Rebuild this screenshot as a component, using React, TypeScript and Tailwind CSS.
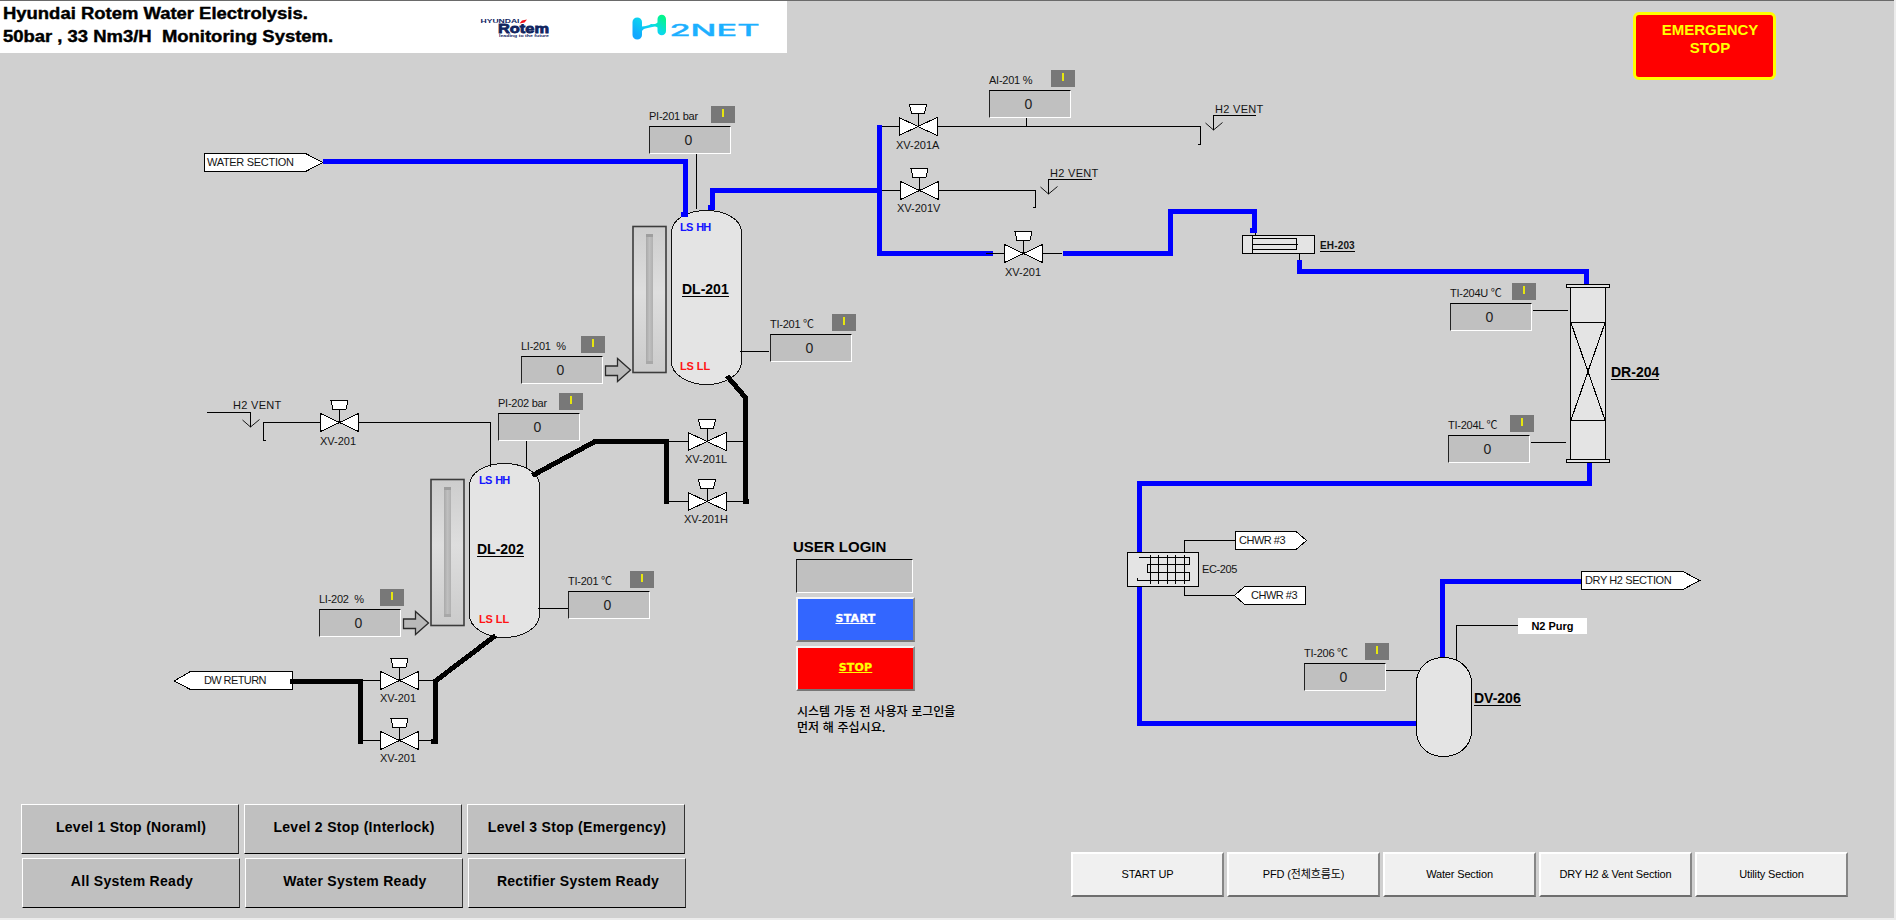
import React from "react";

const SANS = "font-['Liberation_Sans','Noto_Sans_CJK_KR',sans-serif]";

/* ---------- Text labels on the flow sheet ---------- */

type LabelProps = { at: string; children: React.ReactNode; look?: string };

function Label({ at, children, look = "" }: LabelProps) {
  return (
    <span className={`absolute whitespace-pre text-[11px] leading-[12px] text-[#141414] ${at} ${look}`}>{children}</span>
  );
}

function EquipmentName({ at, children }: LabelProps) {
  return (
    <span
      className={`absolute whitespace-pre border-b border-black text-[14px] font-bold leading-[13px] text-black ${at}`}
    >
      {children}
    </span>
  );
}

/* ---------- Instrument readout: caption, status flag, value ---------- */

type ReadoutProps = { at: string; name: string; width?: string };

function Readout({ at, name, width = "w-[86px]" }: ReadoutProps) {
  return (
    <div className={`absolute flex flex-col ${width} ${at}`}>
      <div className="flex h-[20px] items-start justify-between">
        <span className="whitespace-pre pt-[4px] text-[11px] leading-[12px] tracking-[-0.25px] text-[#141414]">
          {name}
        </span>
        <span className="flex h-[17px] w-[24px] justify-center bg-[#787878] pt-[3px]">
          <span className="h-[8px] w-[2px] bg-[#e6e610]" />
        </span>
      </div>
      <div className="flex h-[28px] w-[82px] items-center justify-center border border-b-white border-l-[#222] border-r-white border-t-black bg-[#c0c0c0] pr-[3px] text-[14px] leading-none text-[#222]">
        0
      </div>
    </div>
  );
}

const readouts: ReadoutProps[] = [
  { at: "left-[649px] top-[106px]", name: "PI-201 bar" },
  { at: "left-[770px] top-[314px]", name: "TI-201 ℃" },
  { at: "left-[989px] top-[70px]", name: "AI-201 %" },
  { at: "left-[521px] top-[336px]", name: "LI-201  %", width: "w-[84px]" },
  { at: "left-[1450px] top-[283px]", name: "TI-204U ℃" },
  { at: "left-[1448px] top-[415px]", name: "TI-204L ℃" },
  { at: "left-[498px] top-[393px]", name: "PI-202 bar", width: "w-[85px]" },
  { at: "left-[568px] top-[571px]", name: "TI-201 ℃" },
  { at: "left-[319px] top-[589px]", name: "LI-202  %", width: "w-[85px]" },
  { at: "left-[1304px] top-[643px]", name: "TI-206 ℃", width: "w-[85px]" },
];

/* ---------- Drawn symbols ---------- */

function Valve({ x, y }: { x: number; y: number }) {
  return (
    <g transform={`translate(${x} ${y})`} fill="#fff" stroke="#000" strokeWidth="1">
      <path d="M0 0V-13" />
      <path d="M-19 -9V9L19 -9V9Z" />
      <path d="M-8.5 -22H8.5L6.5 -13H-6.5Z" />
    </g>
  );
}

function VentArrow({ x, y, run }: { x: number; y: number; run: number }) {
  return (
    <g transform={`translate(${x} ${y})`} fill="none" stroke="#000">
      <path d={`M${run} 0H0V14`} />
      <path d="M-8 7.500L0 14.500L9 7" strokeWidth="0.9" shapeRendering="auto" />
    </g>
  );
}

function TankWithGauge({ x, y }: { x: number; y: number }) {
  return (
    <g transform={`translate(${x} ${y})`}>
      <path
        d="M0.500 22C0.500 10 16 0.500 35.500 0.500S70.500 10 70.500 22V152C70.500 164 55 174.500 35.500 174.500S0.500 164 0.500 152Z"
        fill="#e4e4e4"
        stroke="#111"
      />
      <rect x="-38" y="16.500" width="33" height="146" fill="url(#gauge)" stroke="#3c3c3c" strokeWidth="1.600" shapeRendering="auto" />
      <rect x="-25" y="24" width="7" height="130" fill="url(#gaugeBar)" />
      <rect x="-25" y="24" width="7" height="3" fill="#9e9e9e" />
      <rect x="-25" y="151" width="7" height="3" fill="#a8a8a8" />
      <path d="M-65.500 156V165.500H-53.500V171.500L-40.500 160L-53.500 148.500V156Z" fill="#b9b9b9" stroke="#2a2a2a" strokeWidth="1.300" shapeRendering="auto" />
    </g>
  );
}

function Drawing() {
  return (
    <svg className="absolute inset-0" width="1896" height="920" viewBox="0 0 1896 920" shapeRendering="crispEdges">
      <defs>
        <linearGradient id="gauge" x1="0" y1="0" x2="0" y2="1">
          <stop offset="0" stopColor="#cdcdcd" />
          <stop offset="0.450" stopColor="#dedede" />
          <stop offset="1" stopColor="#cbcbcb" />
        </linearGradient>
        <linearGradient id="gaugeBar" x1="0" y1="0" x2="1" y2="0">
          <stop offset="0" stopColor="#a9a9a9" />
          <stop offset="0.500" stopColor="#bfbfbf" />
          <stop offset="1" stopColor="#b0b0b0" />
        </linearGradient>
      </defs>

      {/* process tags */}
      <g fill="#fff" stroke="#000">
        <path d="M204.500 153.500H305.500L323 162.500L305.500 171.500H204.500Z" />
        <path d="M174 681L190.500 671.500H292.500V689.500H190.500Z" />
        <path d="M1235.500 531.500H1296L1306.500 540.500L1296 549.500H1235.500Z" />
        <path d="M1234.500 595.500L1244.500 586.500H1305.500V604.500H1244.500Z" />
      </g>

      <TankWithGauge x={671} y={210} />
      <TankWithGauge x={469} y={463} />

      {/* instrument and vent lines */}
      <g fill="none" stroke="#000">
        <path d="M696.500 154V209M740 351.500H769" />
        <path d="M882 126.500H1200.500V144.500H1198M1026.500 118V126" />
        <path d="M882 190.500H1035.500V207.500H1033" />
        <path d="M266 440.500H263.500V422.500H490.500V466.500M526.500 441V468" />
        <path d="M538 608.500H568M669 441.500H743M669 501.500H743" />
        <path d="M363 680.500H434M363 740.500H434" />
        <path d="M1299.500 253V260M1255.500 232V236M1533 310.500H1568M1531 442.500H1566" />
        <path d="M1184.500 552V540.500H1235M1184.500 586V595.500H1235" />
      </g>

      {/* hydrogen and water pipes */}
      <g fill="none" stroke="#0000ff" strokeWidth="5" strokeLinejoin="miter">
        <path d="M323 161.500H685.500V217M681 214.500H688" />
        <path d="M712.500 210V190.500H879.500M708 207.500H715" />
        <path d="M879.500 125V253.500H993M1063 253.500H1170.500V211.500H1254.500V233M1250 230.500H1257" />
        <path d="M1299.500 260V271.500H1586.500V285" />
        <path d="M1589.500 462V483.500H1139.500V723.500H1416" />
      </g>
      <path d="M882 126.500H899M986 253.500H1062" stroke="#000" />

      {/* drain pipes */}
      <g fill="none" stroke="#000" strokeWidth="5">
        <path d="M727 376L745.500 397.500V504M742.500 501.500H749" />
        <path d="M532.500 475.500L595 441.500H666.500V504" />
        <path d="M290 681.500H360.500V744" />
        <path d="M495.500 635.500L435.500 681V744M431 741.500H438" />
      </g>

      <Valve x={918} y={126.5} />
      <Valve x={919.5} y={190.5} />
      <Valve x={1023.5} y={253.5} />
      <Valve x={339.5} y={422.5} />
      <Valve x={399.5} y={680.5} />
      <Valve x={399.5} y={740.5} />
      <Valve x={707} y={441.5} />
      <Valve x={707} y={501.5} />

      <VentArrow x={1213.5} y={115.5} run={42} />
      <VentArrow x={1048.5} y={179.5} run={43} />
      <VentArrow x={250.5} y={412.5} run={-44} />

      {/* EH-203 */}
      <g fill="#e4e4e4" stroke="#000">
        <rect x="1242.500" y="235.500" width="72" height="18" />
        <path d="M1252.500 235V254M1252.500 238.500H1296.500V249.500H1252.500M1252.500 244.500H1298" />
      </g>

      {/* DR-204 */}
      <g fill="#e4e4e4" stroke="#000">
        <rect x="1570.500" y="287" width="35" height="173" />
        <path d="M1570.500 322.500H1605.500V420.500H1570.500Z" />
        <path d="M1571 323L1605 420M1605 323L1571 420" strokeWidth="1.100" />
        <rect x="1566.500" y="284.500" width="43" height="3" />
        <rect x="1566.500" y="459.500" width="43" height="3" />
      </g>

      {/* EC-205 */}
      <g fill="#e4e4e4" stroke="#000">
        <rect x="1127.500" y="552.500" width="71" height="34" />
        <path fill="none" d="M1150.500 555V584M1158.500 555V584M1167.500 555V584M1175.500 555V584M1184.500 555V584" />
        <path fill="none" d="M1139 557.500H1189.500V564.500H1147.500V572.500H1189.500V580.500H1137.500V578" />
      </g>

      {/* DV-206 */}
      <path d="M1442.500 657V581.500H1582" fill="none" stroke="#0000ff" strokeWidth="5" />
      <path d="M1456.500 661V625.500H1518M1386 670.500H1420" fill="none" stroke="#000" />
      <path
        d="M1416.500 683C1416.500 668 1428 657.500 1443.500 657.500S1471.500 668 1471.500 683V731C1471.500 746 1459 756.500 1443.500 756.500S1416.500 746 1416.500 731Z"
        fill="#e4e4e4"
        stroke="#000"
      />
      <path d="M1581.500 571.500H1683L1699.500 580.500L1683 589.500H1581.500Z" fill="#fff" stroke="#000" />
    </svg>
  );
}

/* ---------- Logos ---------- */

function RotemLogo() {
  return (
    <svg width="72" height="22" viewBox="0 0 72 22" className="font-['Liberation_Sans',sans-serif]">
      <text x="0.500" y="5.500" fontSize="5.500" fontWeight="700" fill="#10245f" textLength="39" lengthAdjust="spacingAndGlyphs">
        HYUNDAI
      </text>
      <text x="18" y="16" fontSize="13" fontWeight="700" fill="#10245f" stroke="#10245f" strokeWidth="0.800" textLength="51" lengthAdjust="spacingAndGlyphs">
        Rotem
      </text>
      <path d="M39.500 6.500L42 3.500L47 2.500L44.500 5.500Z" fill="#f01018" />
      <text x="19" y="19.500" fontSize="3.200" fontWeight="700" fill="#10245f" textLength="50" lengthAdjust="spacingAndGlyphs">
        leading to the future
      </text>
    </svg>
  );
}

function H2NetLogo() {
  return (
    <svg width="130" height="28" viewBox="0 0 130 28" className="font-['Inter','Liberation_Sans',sans-serif]">
      <defs>
        <linearGradient id="hMark" x1="0" y1="1" x2="1" y2="0">
          <stop offset="0.150" stopColor="#12a8ff" />
          <stop offset="0.550" stopColor="#0bd8ee" />
          <stop offset="0.900" stopColor="#04f58c" />
        </linearGradient>
      </defs>
      <path
        d="M0.500 9A4.700 4.500 0 0 1 10 9V13.500C13 13.500 14.500 12.500 17.500 12C19 10 22 12.500 25.500 9.500V6A4.200 4.200 0 0 1 34 6V18A4.200 4.200 0 0 1 25.500 18V14.500C23 12.500 20 14.500 18 14.500C15 15.500 12 15 10 18V22A4.700 4.500 0 0 1 0.500 22Z"
        fill="url(#hMark)"
      />
      <text x="37.500" y="22.500" fontSize="16.500" fontWeight="500" fill="#1cb0ff" stroke="#1cb0ff" strokeWidth="0.300" textLength="90" lengthAdjust="spacingAndGlyphs">
        2NET
      </text>
    </svg>
  );
}

/* ---------- Panels and buttons ---------- */

function Header() {
  return (
    <header className="flex items-start justify-between border-t border-[#6a6a6a] pr-[118px]">
      <div className="flex h-[52px] w-[787px] items-start bg-white">
        <h1 className="w-[480px] whitespace-pre pl-[3px] pt-[1px] text-[16px] font-bold leading-[23px] text-black [-webkit-text-stroke:0.4px_black]">
          <span className="block origin-left scale-x-[1.153]">Hyundai Rotem Water Electrolysis.</span>
          <span className="block origin-left scale-x-[1.153]">50bar , 33 Nm3/H  Monitoring System.</span>
        </h1>
        <div className="w-[152px] pt-[16px]">
          <RotemLogo />
        </div>
        <div className="pt-[12px]">
          <H2NetLogo />
        </div>
      </div>
      <button className="mt-[11px] h-[68px] w-[143px] rounded-[6px] border-[3px] border-[#ffff00] bg-[#ff0000] pb-[14px] pl-[11px] text-[15px] font-bold leading-[18px] text-[#ffff00]">
        EMERGENCY
        <br />
        STOP
      </button>
    </header>
  );
}

function UserLogin() {
  return (
    <section className="absolute left-[796px] top-[538px] flex w-[164px] flex-col">
      <h2 className="-ml-[3px] h-[21px] text-[15px] font-bold leading-[18px] text-black">USER LOGIN</h2>
      <div className="h-[34px] w-[117px] border border-b-white border-l-[#222] border-r-white border-t-black bg-[#c0c0c0]" />
      <button className="mt-[4px] h-[45px] w-[119px] border-2 border-b-[#777] border-l-[#f4f4f4] border-r-[#888] border-t-[#f4f4f4] bg-[#3366ff] font-['DejaVu_Sans',sans-serif] text-[11px] font-bold tracking-[0.3px] text-white underline [-webkit-text-stroke:0.3px_white]">
        START
      </button>
      <button className="mt-[4px] h-[45px] w-[119px] border-2 border-b-[#777] border-l-[#f4f4f4] border-r-[#888] border-t-[#f4f4f4] bg-[#ff0000] font-['DejaVu_Sans',sans-serif] text-[11px] font-bold tracking-[0.2px] text-[#ffff00] underline [-webkit-text-stroke:0.3px_#ffff00]">
        STOP
      </button>
      <p className="mt-[12px] whitespace-nowrap pl-px font-['Noto_Sans_CJK_KR',sans-serif] text-[12px] font-medium leading-[16px] text-black [word-spacing:1px]">
        시스템 가동 전 사용자 로그인을
        <br />
        먼저 해 주십시요.
      </p>
    </section>
  );
}

const systemRows = [
  { pad: "pl-0", items: ["Level 1 Stop (Noraml)", "Level 2 Stop (Interlock)", "Level 3 Stop (Emergency)"] },
  { pad: "pl-px", items: ["All System Ready", "Water System Ready", "Rectifier System Ready"] },
];

const sections = ["START UP", "PFD (전체흐름도)", "Water Section", "DRY H2 & Vent Section", "Utility Section"];

function Footer() {
  return (
    <footer className="flex items-start justify-between pb-[10px] pl-[21px] pr-[46px]">
      <div className="flex flex-col gap-[4px]">
        {systemRows.map((row) => (
          <div key={row.items[0]} className={`flex gap-[5px] ${row.pad}`}>
            {row.items.map((name) => (
              <button
                key={name}
                className="h-[50px] w-[218px] border border-b-black border-l-white border-r-[#333] border-t-white bg-[#c0c0c0] pb-[3px] pl-[2px] text-[14px] font-bold tracking-[0.3px] text-black"
              >
                {name}
              </button>
            ))}
          </div>
        ))}
      </div>
      <nav className="flex gap-[3px] pt-[48px]">
        {sections.map((name) => (
          <button
            key={name}
            className="h-[45px] w-[153px] border-2 border-b-[#6e6e6e] border-l-white border-r-[#868686] border-t-white bg-[#f0f0f0] text-[11px] tracking-[-0.15px] text-black"
          >
            {name}
          </button>
        ))}
      </nav>
    </footer>
  );
}

function FlowSheet() {
  return (
    <div className="absolute inset-0">
      <Drawing />

      {readouts.map((r) => (
        <Readout key={r.at} {...r} />
      ))}

      <Label at="left-[207px] top-[156px]" look="tracking-[-0.3px]">WATER SECTION</Label>
      <Label at="left-[204px] top-[674px]" look="tracking-[-0.6px]">DW RETURN</Label>
      <Label at="left-[1239px] top-[534px]" look="tracking-[-0.5px]">CHWR #3</Label>
      <Label at="left-[1251px] top-[589px]" look="tracking-[-0.5px]">CHWR #3</Label>
      <Label at="left-[1585px] top-[574px]" look="tracking-[-0.4px]">DRY H2 SECTION</Label>
      <Label at="left-[1202px] top-[563px]" look="tracking-[-0.4px]">EC-205</Label>

      <Label at="left-[896px] top-[139px]">XV-201A</Label>
      <Label at="left-[897px] top-[202px]">XV-201V</Label>
      <Label at="left-[1005px] top-[266px]">XV-201</Label>
      <Label at="left-[320px] top-[435px]">XV-201</Label>
      <Label at="left-[380px] top-[692px]">XV-201</Label>
      <Label at="left-[380px] top-[752px]">XV-201</Label>
      <Label at="left-[685px] top-[453px]">XV-201L</Label>
      <Label at="left-[684px] top-[513px]">XV-201H</Label>

      <Label at="left-[1215px] top-[103px]" look="tracking-[0.3px]">H2 VENT</Label>
      <Label at="left-[1050px] top-[167px]" look="tracking-[0.3px]">H2 VENT</Label>
      <Label at="left-[233px] top-[399px]" look="tracking-[0.3px]">H2 VENT</Label>

      <Label at="left-[680px] top-[221px]" look="font-bold tracking-[-0.8px] [word-spacing:1.5px] !text-[#1414ff]">LS HH</Label>
      <Label at="left-[680px] top-[360px]" look="font-bold tracking-[-0.1px] !text-[#ff1414]">LS LL</Label>
      <Label at="left-[479px] top-[474px]" look="font-bold tracking-[-0.8px] [word-spacing:1.5px] !text-[#1414ff]">LS HH</Label>
      <Label at="left-[479px] top-[613px]" look="font-bold tracking-[-0.1px] !text-[#ff1414]">LS LL</Label>

      <EquipmentName at="left-[682px] top-[283px]">DL-201</EquipmentName>
      <EquipmentName at="left-[477px] top-[543px]">DL-202</EquipmentName>
      <EquipmentName at="left-[1611px] top-[366px]">DR-204</EquipmentName>
      <EquipmentName at="left-[1474px] top-[692px]">DV-206</EquipmentName>
      <Label at="left-[1320px] top-[241px]" look="border-b border-black !text-[10px] !leading-[10px] font-bold tracking-[0.15px]">EH-203</Label>

      <span className="absolute left-[1518px] top-[618px] flex h-[16px] w-[69px] items-center justify-center bg-white text-[11px] font-bold leading-none text-black">
        N2 Purg
      </span>

      <UserLogin />
    </div>
  );
}

export default function App() {
  return (
    <main
      className={`relative flex h-[920px] w-[1896px] flex-col justify-between overflow-hidden border-b-2 border-r-2 border-[#ececec] bg-[#d0d0d0] ${SANS}`}
    >
      <FlowSheet />
      <div className="relative">
        <Header />
      </div>
      <div className="relative">
        <Footer />
      </div>
    </main>
  );
}
